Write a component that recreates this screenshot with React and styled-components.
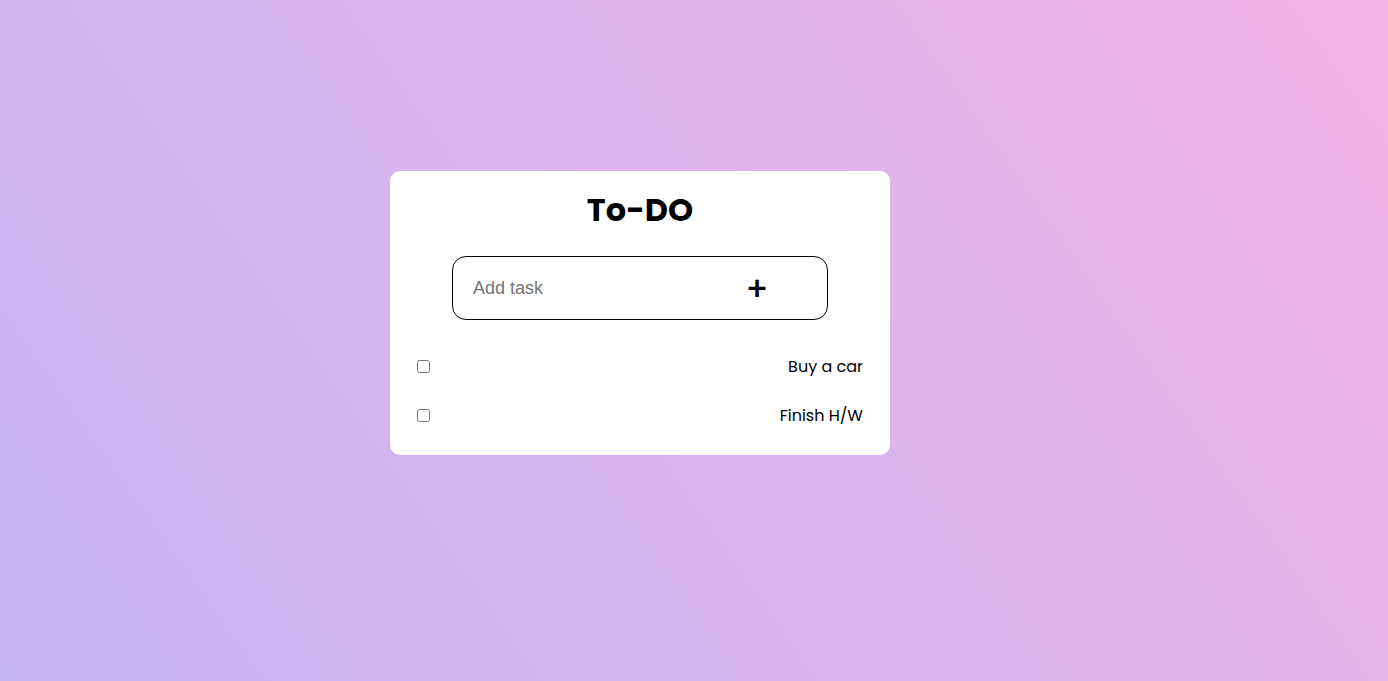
import React from "react";
import styled, { createGlobalStyle } from "styled-components";

const Global = createGlobalStyle`
  html, body { margin: 0; padding: 0; }
  body {
    min-height: 681px;
    background: linear-gradient(55deg, #c3b3f0 0%, #dab4ee 48%, #f3b3e8 100%);
    font-family: "Poppins", "Open Sans", sans-serif;
  }
`;

const Page = styled.div`
  min-height: 681px;
  box-sizing: border-box;
  padding: 171px 0 0 390px;
  display: flex;
  align-items: flex-start;
`;

const Card = styled.div`
  width: 500px;
  height: 284px;
  box-sizing: border-box;
  background: #fff;
  border-radius: 10px;
  padding: 18px 27px 0 27px;
  display: flex;
  flex-direction: column;
  align-items: center;
`;

const Title = styled.h1`
  margin: 0;
  font-family: "Poppins", "Open Sans", sans-serif;
  font-weight: 700;
  font-size: 32px;
  line-height: 42px;
  color: #000;
`;

const InputBox = styled.div`
  margin-top: 25px;
  width: 376px;
  height: 64px;
  box-sizing: border-box;
  border: 1px solid #000;
  border-radius: 14px;
  display: flex;
  align-items: center;
  padding: 0 0 0 20px;
`;

const TaskInput = styled.input`
  flex: 1;
  min-width: 0;
  border: none;
  outline: none;
  background: transparent;
  font-family: "Liberation Sans", Arial, sans-serif;
  font-size: 18px;
  color: #000;
  padding: 0;
  &::placeholder { color: #757575; }
`;

const AddButton = styled.button`
  flex: 0 0 140px;
  height: 100%;
  border: none;
  background: transparent;
  font-family: "Poppins", "Open Sans", sans-serif;
  font-weight: 500;
  font-size: 33px;
  line-height: 1;
  color: #000;
  padding: 2px 0 0 0;
  cursor: pointer;
  display: flex;
  align-items: center;
  justify-content: center;
`;

const List = styled.ul`
  list-style: none;
  margin: 34px 0 0 0;
  padding: 0;
  width: 100%;
  display: flex;
  flex-direction: column;
  gap: 25px;
`;

const Item = styled.li`
  display: flex;
  align-items: center;
  justify-content: space-between;
  height: 24px;
`;

const Check = styled.input`
  width: 13px;
  height: 13px;
  margin: 0;
`;

const Label = styled.span`
  font-family: "Poppins", "Open Sans", sans-serif;
  font-size: 16px;
  color: #000;
`;

const tasks = ["Buy a car", "Finish H/W"];

export default function App() {
  return (
    <>
      <Global />
      <Page>
        <Card>
          <Title>To-DO</Title>
          <InputBox>
            <TaskInput placeholder="Add task" />
            <AddButton>+</AddButton>
          </InputBox>
          <List>
            {tasks.map((t) => (
              <Item key={t}>
                <Check type="checkbox" />
                <Label>{t}</Label>
              </Item>
            ))}
          </List>
        </Card>
      </Page>
    </>
  );
}
